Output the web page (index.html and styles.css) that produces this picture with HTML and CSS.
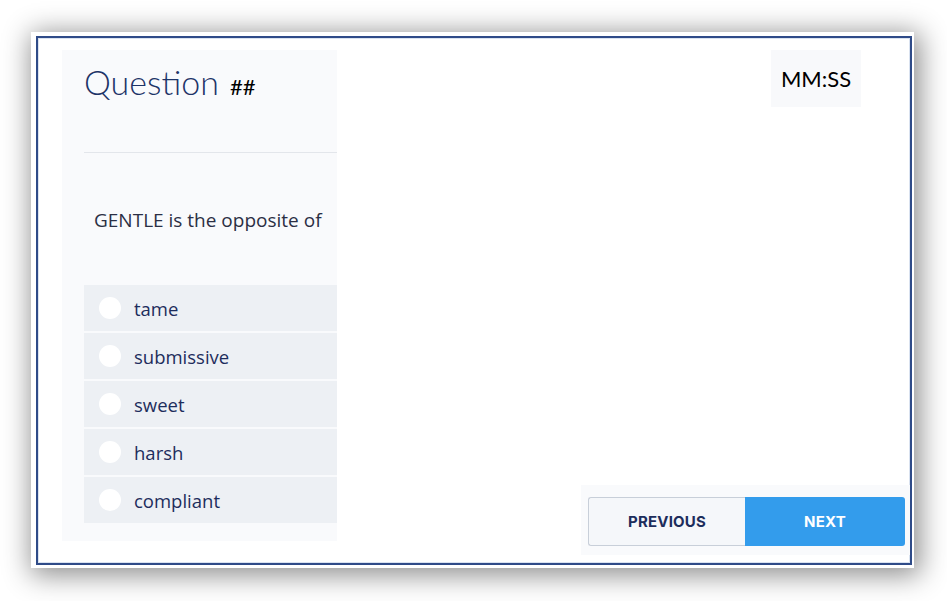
FILE: index.html
```html
<!DOCTYPE html>
<html lang="en">
<head>
    <meta charset="UTF-8">
    <meta name="viewport" content="width=device-width, initial-scale=1.0">
    <title>Quiz</title>
    <link rel="stylesheet" href="styles.css">
</head>
<body>
    <div class="frame">
        <div class="card">
            <div class="question-panel">
                <div class="question-head">
                    <span class="question-title">Question</span>
                    <span class="question-num">##</span>
                </div>
                <p class="question-text">GENTLE is the opposite of</p>
                <ul class="options">
                    <li class="option"><span class="radio"></span>tame</li>
                    <li class="option"><span class="radio"></span>submissive</li>
                    <li class="option"><span class="radio"></span>sweet</li>
                    <li class="option"><span class="radio"></span>harsh</li>
                    <li class="option"><span class="radio"></span>compliant</li>
                </ul>
            </div>
            <div class="side">
                <div class="timer">MM:SS</div>
                <div class="nav">
                    <button type="button" class="btn btn-prev">PREVIOUS</button>
                    <button type="button" class="btn btn-next">NEXT</button>
                </div>
            </div>
        </div>
    </div>
</body>
</html>
```
FILE: styles.css
```css
body {
    margin: 0;
    padding: 32px 0 33px 31px;
    background-color: #fff;
    font-family: "Open Sans", Lato, sans-serif;
}
.frame {
    width: 883px;
    height: 536px;
    padding: 4px 2px 3px 5px;
    box-sizing: border-box;
    background-color: #fff;
    box-shadow: 3px 4px 26px 3px rgba(0, 0, 0, 0.45);
}
.card {
    display: flex;
    height: 100%;
    box-sizing: border-box;
    border: 2px solid #2f4b88;
    box-shadow: inset 0 0 0 1px #d9e2f0;
    padding: 12px 0 0 24px;
}
.question-panel {
    width: 275px;
    margin-bottom: 22px;
    background-color: #f9fafc;
    padding: 0 0 18px 22px;
    box-sizing: border-box;
}
.question-head {
    height: 103px;
    box-sizing: border-box;
    padding-top: 11px;
    border-bottom: 1px solid #e3e6eb;
}
.question-title {
    font-family: Lato, sans-serif;
    font-weight: 300;
    font-size: 34px;
    color: #1e3468;
}
.question-num {
    margin-left: 7px;
    font-family: Lato, sans-serif;
    font-size: 22px;
    color: #000;
}
.question-text {
    margin: 54px 0 52px 10px;
    font-size: 19px;
    font-weight: 500;
    color: #2b2f44;
}
.options {
    list-style: none;
    margin: 0;
    padding: 0;
    display: flex;
    flex-direction: column;
    gap: 2px;
}
.option {
    display: flex;
    align-items: center;
    height: 46px;
    padding-left: 15px;
    background-color: #edf0f4;
    font-size: 18.5px;
    font-weight: 500;
    color: #1d2d5c;
}
.radio {
    width: 22px;
    height: 22px;
    margin-right: 13px;
    border-radius: 50%;
    background-color: #fff;
}
.side {
    flex: 1;
    display: flex;
    flex-direction: column;
    justify-content: space-between;
    align-items: flex-end;
    padding-bottom: 8px;
}
.timer {
    width: 90px;
    height: 57px;
    margin-right: 49px;
    display: flex;
    align-items: center;
    justify-content: center;
    background-color: #f8f9fb;
    font-family: Lato, sans-serif;
    font-size: 22px;
    color: #000;
}
.nav {
    display: flex;
    padding: 12px 5px 9px 7px;
    background-color: #f9fafc;
}
.btn {
    width: 157px;
    height: 49px;
    font-family: Inter, "DejaVu Sans", sans-serif;
    font-size: 15px;
    font-weight: 700;
    letter-spacing: 0.2px;
    cursor: pointer;
}
.btn-prev {
    background-color: #f5f7fa;
    border: 1px solid #c8cfd9;
    border-right: none;
    border-radius: 3px 0 0 3px;
    color: #1d2d5c;
}
.btn-next {
    width: 160px;
    background-color: #339cec;
    border: none;
    border-radius: 0 3px 3px 0;
    color: #fff;
}
```
